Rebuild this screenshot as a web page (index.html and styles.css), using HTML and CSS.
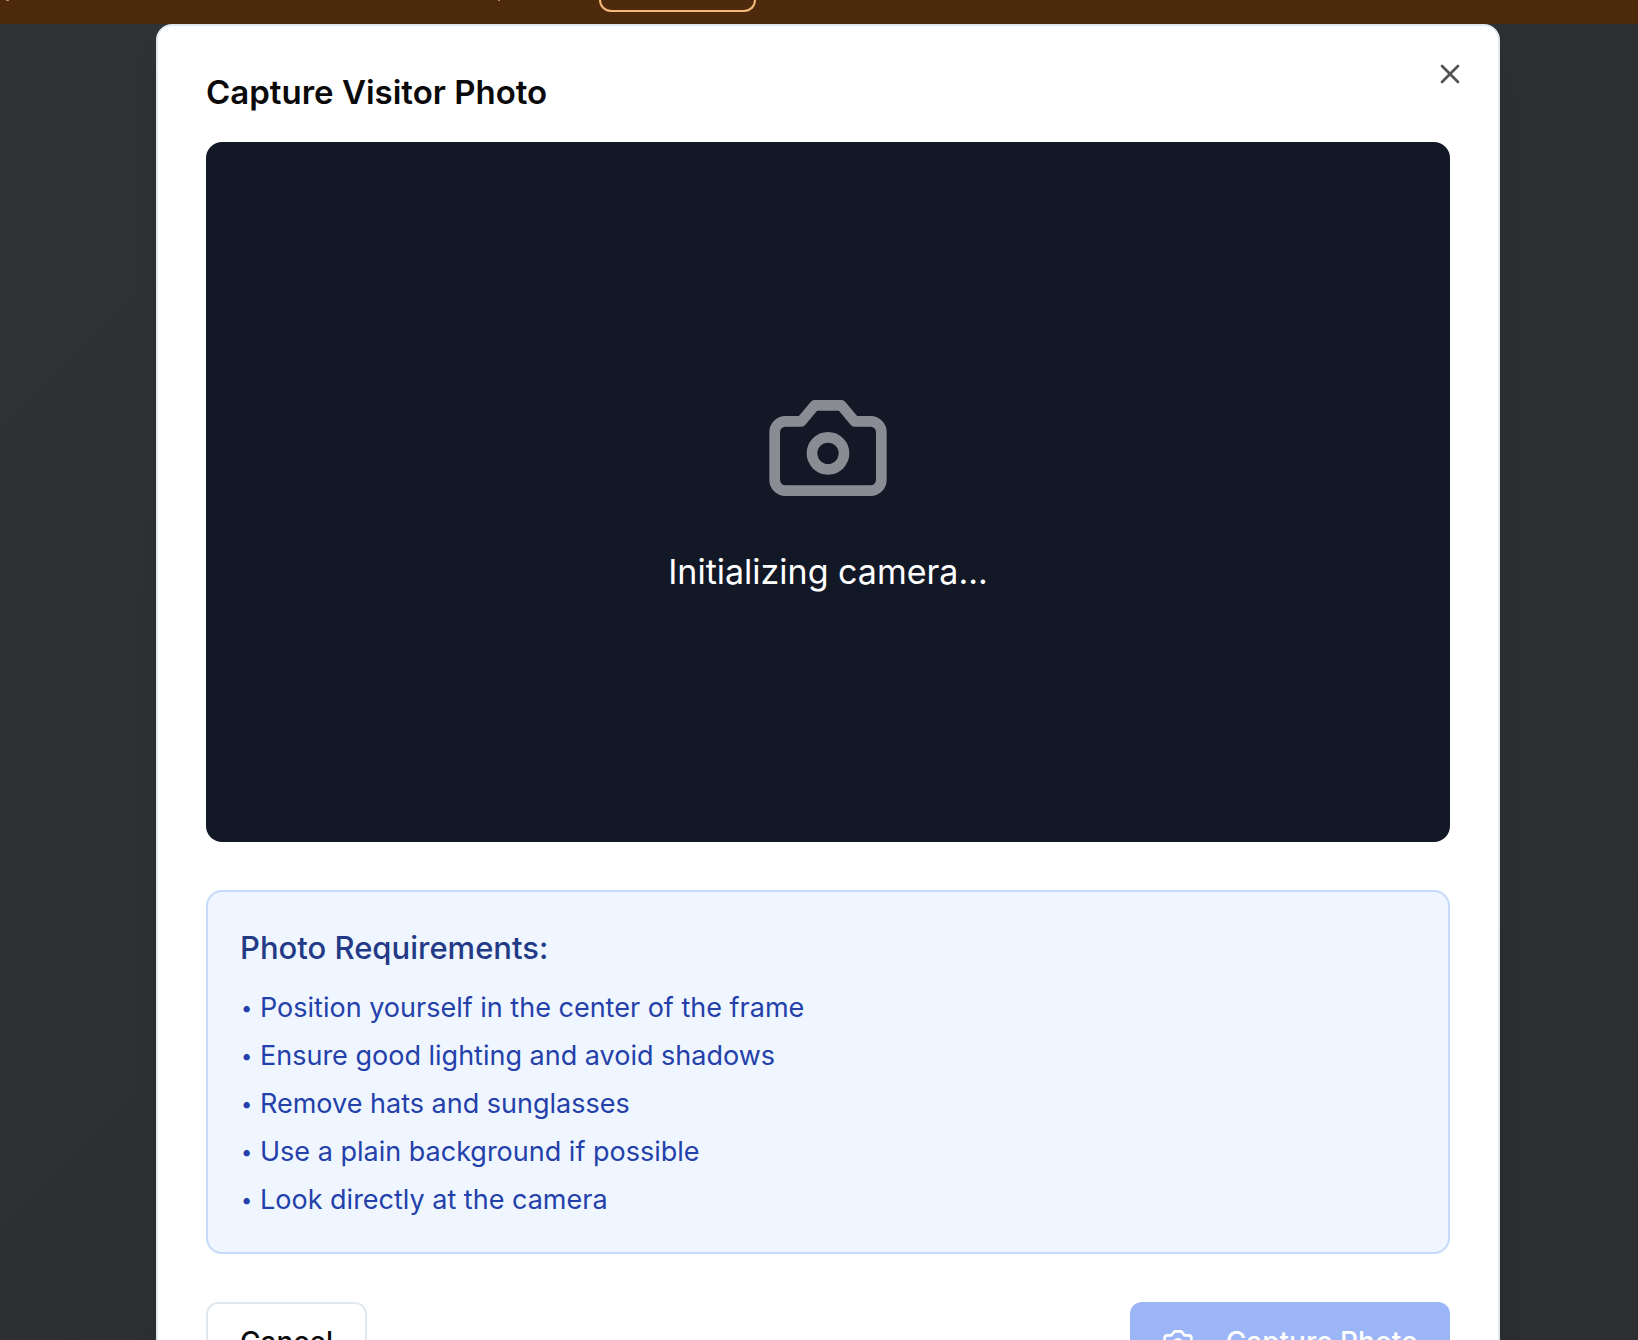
FILE: index.html
```html
<!DOCTYPE html>
<html lang="en">
<head>
<meta charset="utf-8">
<meta name="viewport" content="width=device-width, initial-scale=1">
<title>Capture Visitor Photo</title>
<link rel="stylesheet" href="styles.css">
</head>
<body>
<header class="banner">
  <button class="banner-action" type="button" aria-label="Banner action"></button>
</header>
<main class="backdrop">
  <section class="dialog" role="dialog" aria-modal="true" aria-labelledby="dialog-title">
    <button class="close" type="button" aria-label="Close">
      <svg viewBox="0 0 24 24" class="icon"><path d="M18 6 6 18M6 6l12 12"/></svg>
    </button>
    <h1 class="title" id="dialog-title">Capture Visitor Photo</h1>
    <div class="preview">
      <svg viewBox="0 0 24 24" class="icon preview-icon"><path d="M14.5 4h-5L7 7H4a2 2 0 0 0-2 2v9a2 2 0 0 0 2 2h16a2 2 0 0 0 2-2V9a2 2 0 0 0-2-2h-3l-2.5-3z"/><circle cx="12" cy="13" r="3"/></svg>
      <p class="status">Initializing camera...</p>
    </div>
    <section class="requirements">
      <h2 class="requirements-title">Photo Requirements:</h2>
      <ul class="requirements-list">
        <li>Position yourself in the center of the frame</li>
        <li>Ensure good lighting and avoid shadows</li>
        <li>Remove hats and sunglasses</li>
        <li>Use a plain background if possible</li>
        <li>Look directly at the camera</li>
      </ul>
    </section>
    <div class="actions">
      <button class="button button-outline" type="button">Cancel</button>
      <button class="button button-primary" type="button" disabled>
        <svg viewBox="0 0 24 24" class="icon"><path d="M14.5 4h-5L7 7H4a2 2 0 0 0-2 2v9a2 2 0 0 0 2 2h16a2 2 0 0 0 2-2V9a2 2 0 0 0-2-2h-3l-2.5-3z"/><circle cx="12" cy="13" r="3"/></svg>
        Capture Photo
      </button>
    </div>
  </section>
</main>
</body>
</html>
```
FILE: styles.css
```css
*, *::before, *::after {
  box-sizing: border-box;
}

body {
  margin: 0;
  height: 100vh;
  display: flex;
  flex-direction: column;
  overflow: hidden;
  font-family: Inter, "Liberation Sans", sans-serif;
  color: #0a0a0a;
  background: #2e2f33;
}

h1, h2, p, ul {
  margin: 0;
  padding: 0;
}

.icon {
  display: block;
  width: 32px;
  height: 32px;
  flex: none;
  fill: none;
  stroke: currentColor;
  stroke-width: 2;
  stroke-linecap: round;
  stroke-linejoin: round;
}

.banner {
  flex: none;
  display: flex;
  height: 24px;
  padding-left: 599px;
  background:
    linear-gradient(#c08a52, #c08a52) 6px 0 / 3px 1px no-repeat,
    linear-gradient(#c08a52, #c08a52) 498px 0 / 2px 1px no-repeat,
    #4e2a0c;
}

.banner-action {
  width: 157px;
  height: 12px;
  padding: 0;
  border: 2px solid #f6b878;
  border-top: 0;
  border-radius: 0 0 12px 12px;
  background: transparent;
}

.backdrop {
  flex: 1;
  min-height: 0;
  display: flex;
  justify-content: center;
  align-items: flex-start;
  padding-left: 18px;
  overflow: hidden;
  background: linear-gradient(135deg, #313233, #2e2f33 50%, #2d2e32);
}

.dialog {
  position: relative;
  width: 100%;
  max-width: 1344px;
  padding: 48px;
  border: 2px solid #e2e8f0;
  border-radius: 16px;
  background: #fff;
  box-shadow: 0 20px 30px -6px rgb(0 0 0 / 10%), 0 8px 12px -8px rgb(0 0 0 / 10%);
}

.close {
  position: absolute;
  top: 32px;
  right: 32px;
  padding: 0;
  border: 0;
  background: transparent;
  color: #0a0a0a;
  opacity: 0.7;
}

.title {
  margin-bottom: 32px;
  font-size: 33px;
  font-weight: 600;
  line-height: 36px;
}

.preview {
  display: flex;
  flex-direction: column;
  align-items: center;
  justify-content: center;
  gap: 32px;
  aspect-ratio: 16 / 9;
  margin-bottom: 48px;
  border-radius: 16px;
  background: #121826;
  color: #fff;
}

.preview-icon {
  width: 128px;
  height: 128px;
  opacity: 0.5;
}

.status {
  font-size: 34px;
  line-height: 56px;
}

.requirements {
  margin-bottom: 48px;
  padding: 32px;
  border: 2px solid #c3dafb;
  border-radius: 16px;
  background: #eff6ff;
}

.requirements-title {
  margin-bottom: 16px;
  font-size: 31px;
  font-weight: 500;
  line-height: 48px;
  color: #233a87;
}

.requirements-list {
  display: flex;
  flex-direction: column;
  gap: 8px;
  list-style: none;
  font-size: 27px;
  line-height: 40px;
  color: #2440aa;
}

.requirements-list li {
  display: flex;
}

.requirements-list li::before {
  content: "•";
  width: 20px;
  padding-left: 1px;
  font-size: 20px;
}

.actions {
  display: flex;
  justify-content: space-between;
}

.button {
  display: flex;
  align-items: center;
  gap: 32px;
  height: 80px;
  padding: 0 32px;
  border: 0;
  border-radius: 12px;
  font-family: inherit;
  font-size: 28px;
  font-weight: 500;
  line-height: 40px;
}

.button-outline {
  border: 2px solid #e2e8f0;
  background: #fff;
  color: #0a0a0a;
}

.button-primary {
  background: #9cb5f6;
  color: #fff;
}
```
